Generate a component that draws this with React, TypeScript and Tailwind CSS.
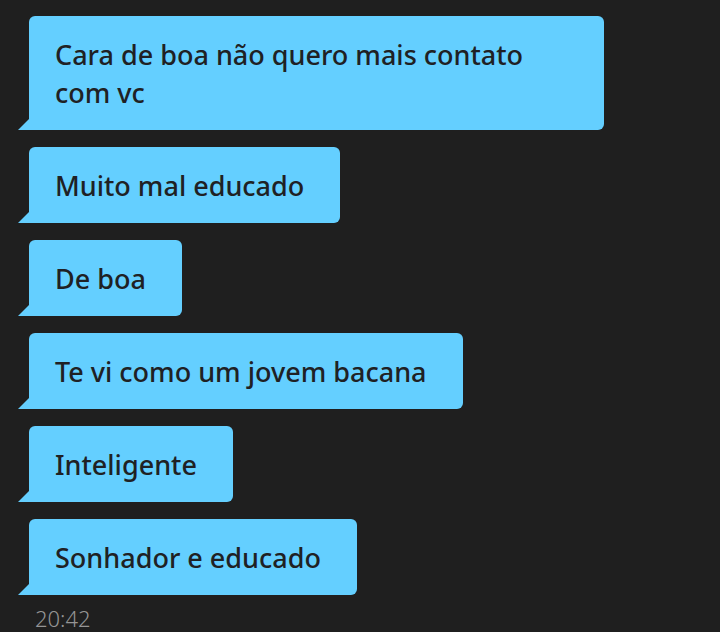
import React from 'react'

const messages = [
  'Cara de boa não quero mais contato com vc',
  'Muito mal educado',
  'De boa',
  'Te vi como um jovem bacana',
  'Inteligente',
  'Sonhador e educado',
]

const Bubble: React.FC<{ text: string }> = ({ text }) => (
  <div className="relative w-fit max-w-[575px] rounded-md rounded-bl-none bg-[#64cfff] pl-[26px] pr-9 pt-[20px] pb-[18px] text-[27px] leading-[38px] font-medium text-[#1f2124]">
    {text}
    <svg
      className="absolute bottom-0 left-[-11px]"
      width="11"
      height="11"
      viewBox="0 0 11 11"
    >
      <polygon points="11,0 11,11 0,11" fill="#64cfff" />
    </svg>
  </div>
)

export default function App() {
  return (
    <div
      className="min-h-[632px] w-[720px] bg-[#1f1f1f] pl-[29px] pt-4"
      style={{ fontFamily: '"Noto Sans", "Open Sans", sans-serif' }}
    >
      <div className="flex flex-col gap-[17px]">
        {messages.map((m, i) => (
          <Bubble key={i} text={m} />
        ))}
      </div>
      <div className="mt-[12px] pl-[6px] text-[22px] leading-[22px] font-light text-[#959595]">
        20:42
      </div>
    </div>
  )
}
